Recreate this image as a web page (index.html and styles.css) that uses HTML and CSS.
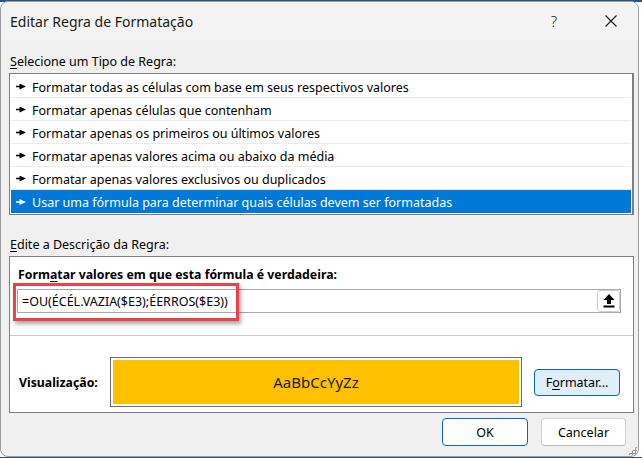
FILE: index.html
```html
<!DOCTYPE html>
<html lang="pt-BR">

<head>
    <meta charset="UTF-8">
    <meta name="viewport" content="width=device-width, initial-scale=1.0">
    <title>Editar Regra de Formatação</title>
    <link rel="stylesheet" href="styles.css">
</head>

<body>
    <div class="dialog">
        <div class="titlebar">
            <span class="title">Editar Regra de Formatação</span>
            <span class="tb-btn help">?</span>
            <span class="tb-btn close">
                <svg width="12" height="12" viewBox="0 0 12 12">
                    <path d="M0.5 0.5 L11.5 11.5 M11.5 0.5 L0.5 11.5" stroke="#1a1a1a" stroke-width="1.1" fill="none" />
                </svg>
            </span>
        </div>

        <div class="content">
            <div class="label"><u>S</u>elecione um Tipo de Regra:</div>
            <ul class="rules">
                <li><i class="arrow"></i>Formatar todas as células com base em seus respectivos valores</li>
                <li><i class="arrow"></i>Formatar apenas células que contenham</li>
                <li><i class="arrow"></i>Formatar apenas os primeiros ou últimos valores</li>
                <li><i class="arrow"></i>Formatar apenas valores acima ou abaixo da média</li>
                <li><i class="arrow"></i>Formatar apenas valores exclusivos ou duplicados</li>
                <li class="selected"><i class="arrow"></i>Usar uma fórmula para determinar quais células devem ser formatadas</li>
            </ul>

            <div class="label label-desc"><u>E</u>dite a Descrição da Regra:</div>
            <div class="desc">
                <div class="desc-title">Form<u>a</u>tar valores em que esta fórmula é verdadeira:</div>
                <div class="formula">
                    <span class="formula-text">=OU(ÉCÉL.VAZIA($E3);ÉERROS($E3))</span>
                    <span class="collapse">
                        <svg width="12" height="14" viewBox="0 0 12 14">
                            <path d="M6 0 L11.5 6 L8 6 L8 10 L4 10 L4 6 L0.5 6 Z" fill="#000" />
                            <rect x="0.5" y="11.5" width="11" height="2" fill="#000" />
                        </svg>
                    </span>
                    <div class="highlight"></div>
                </div>
                <div class="sep"></div>
                <div class="preview-row">
                    <span class="preview-label">Visualização:</span>
                    <div class="preview">
                        <div class="sample">AaBbCcYyZz</div>
                    </div>
                    <span class="btn btn-format">F<u>o</u>rmatar...</span>
                </div>
            </div>

            <div class="actions">
                <span class="btn btn-ok">OK</span>
                <span class="btn">Cancelar</span>
            </div>
        </div>
        <div class="grip"></div>
    </div>
</body>

</html>
```

FILE: styles.css
```css
* {
    padding: 0;
    margin: 0;
    box-sizing: border-box;
}

body {
    background: #fff linear-gradient(#21558a 0, #21558a 2px, transparent 2px);
    font-family: "Noto Sans", "Open Sans", sans-serif;
    font-size: 12.5px;
    color: #000;
}

u {
    text-underline-offset: 2px;
}

.dialog {
    position: relative;
    width: 639px;
    height: 456px;
    margin-top: 1px;
    border: 1px solid #9c9c9c;
    border-radius: 8px;
    background-color: #f0f0f0;
    overflow: hidden;
}

.titlebar {
    display: flex;
    align-items: center;
    height: 38px;
    padding-left: 9px;
    background-color: #f3f3f3;
}

.title {
    flex: 1;
    font-size: 14px;
    color: #1a1a1a;
}

.tb-btn {
    display: flex;
    align-items: center;
    justify-content: center;
    width: 46px;
    height: 38px;
}

.help {
    margin-right: 11px;
    font-size: 15px;
    font-weight: 300;
    color: #1a1a1a;
}

.close {
    margin-right: 4px;
}

.content {
    padding: 14px 4px 0 8px;
}

.label {
    height: 16px;
    line-height: 16px;
    padding-left: 1px;
    margin-bottom: 3px;
}

.label-desc {
    margin-top: 22px;
}

.rules {
    list-style: none;
    background-color: #fff;
    border: 1px solid #7f7f7f;
    border-right-width: 2px;
    padding: 1px;
}

.rules li {
    display: flex;
    align-items: center;
    gap: 6px;
    height: 23px;
    padding: 2px 0 0 5px;
    border-bottom: 1px solid #ebebeb;
    white-space: nowrap;
}

.rules li.selected {
    background-color: #0078d7;
    color: #fff;
    border-bottom: none;
}

.arrow {
    display: block;
    width: 10px;
    height: 6px;
    margin-top: -1px;
    background: #000;
    clip-path: polygon(0 38%, 35% 38%, 35% 0, 100% 50%, 35% 100%, 35% 62%, 0 62%);
}

.selected .arrow {
    background: #fff;
}

.desc {
    background-color: #fff;
    border: 1px solid #7f7f7f;
    padding: 10px 12px 5px 8px;
}

.desc-title {
    height: 16px;
    line-height: 16px;
    font-size: 12.3px;
    font-weight: bold;
}

.formula {
    position: relative;
    display: flex;
    align-items: center;
    justify-content: space-between;
    height: 24px;
    margin: 6px 0 0 -1px;
    border: 1px solid #a8a8a8;
}

.formula-text {
    padding-left: 4px;
}

.collapse {
    display: flex;
    align-items: center;
    justify-content: center;
    width: 23px;
    height: 22px;
    background-color: #fff;
    border: 1px solid #cfcfcf;
    border-radius: 3px;
}

.highlight {
    position: absolute;
    left: -5px;
    top: -7px;
    width: 226px;
    height: 38px;
    border: 3px solid #e8424a;
    box-shadow: 2px 3px 4px rgba(0, 0, 0, 0.35);
}

.sep {
    height: 1px;
    margin: 22px -12px 21px -8px;
    background-color: #cacaca;
}

.preview-row {
    display: flex;
    align-items: center;
}

.preview-label {
    width: 92px;
    padding-left: 1px;
    font-size: 12.3px;
    font-weight: bold;
}

.preview {
    width: 412px;
    height: 50px;
    padding: 2px;
    border: 1px solid #6e6e6e;
}

.sample {
    display: flex;
    align-items: center;
    justify-content: center;
    height: 100%;
    background-color: #ffc000;
    font-size: 15px;
    color: #1a1a1a;
}

.btn {
    display: flex;
    align-items: center;
    justify-content: center;
    height: 28px;
    width: 85px;
    background-color: #fff;
    border: 1px solid #d0d0d0;
    border-bottom-color: #b8b8b8;
    border-radius: 4px;
}

.btn-format {
    width: 86px;
    height: 27px;
    margin-left: 12px;
    background-color: #e0eef9;
    border-color: #0067c0;
}

.actions {
    display: flex;
    justify-content: flex-end;
    gap: 13px;
    margin-top: 5px;
    padding-right: 8px;
}

.btn-ok {
    width: 86px;
    border-color: #0067c0;
}

.grip {
    position: absolute;
    right: 1px;
    bottom: 1px;
    width: 9px;
    height: 9px;
    background: radial-gradient(circle, #9a9a9a 1px, transparent 1.2px) 0 0 / 3px 3px;
    clip-path: polygon(100% 0, 100% 100%, 0 100%);
}
```
